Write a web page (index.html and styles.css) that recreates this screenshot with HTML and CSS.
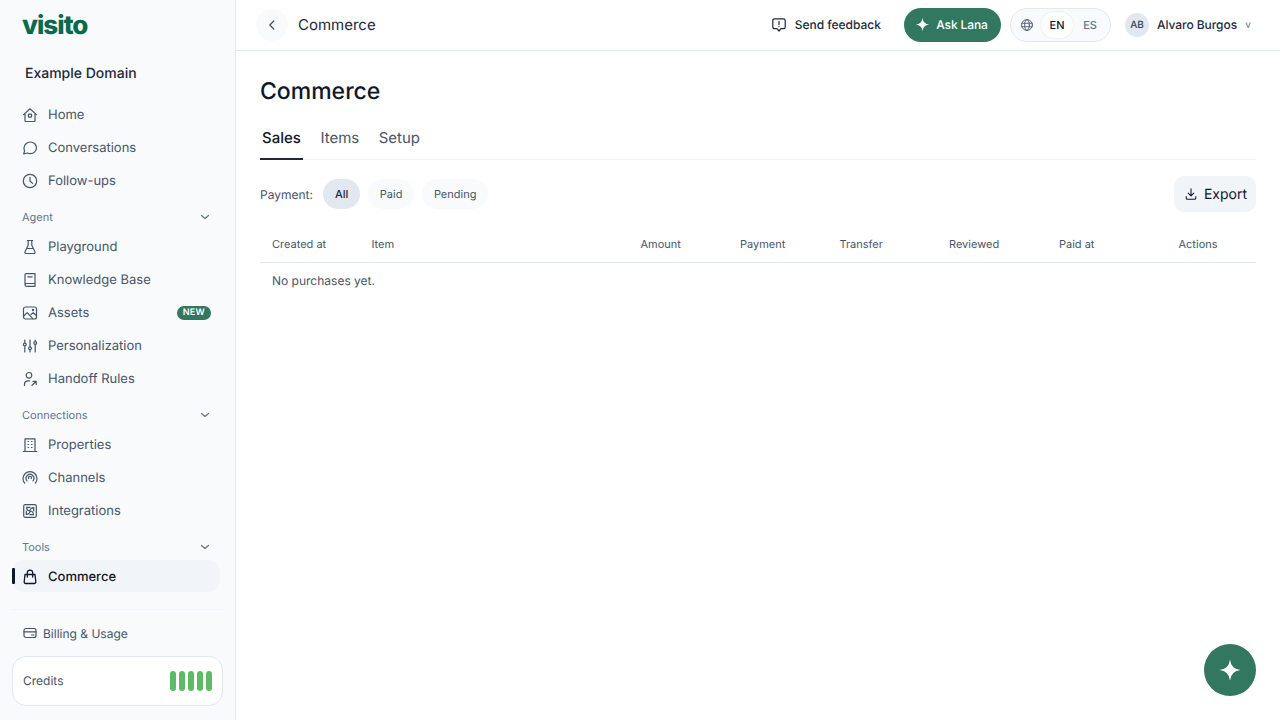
FILE: index.html
```html
<!DOCTYPE html>
<html lang="en">
<head>
<meta charset="utf-8">
<title>Commerce</title>
<link rel="stylesheet" href="styles.css">
</head>
<body>
<div class="app">
  <aside class="sidebar">
    <div class="logo">visito</div>
    <div class="domain">Example Domain</div>
    <nav class="nav">
      <a class="item"><svg class="ico" viewBox="0 0 16 16"><path d="M1.600 7.600 8 1.800l6.400 5.800M3 6.600v7.100c0 .5.300.8.800.8h8.400c.5 0 .8-.3.8-.8V6.600"/><rect x="6.400" y="7.200" width="3.200" height="3" rx=".6"/></svg>Home</a>
      <a class="item"><svg class="ico" viewBox="0 0 16 16"><path d="M8.400 2c3.400 0 6.100 2.600 6.100 5.800s-2.700 5.800-6.100 5.800c-1 0-2-.2-2.800-.6l-3.900.9.900-3.200C2 9.800 1.900 8.800 2 7.800 2.200 4.600 5 2 8.400 2Z"/></svg>Conversations</a>
      <a class="item"><svg class="ico" viewBox="0 0 16 16"><circle cx="8" cy="8" r="6.700"/><path d="M8 4.300V8l2.600 2.400"/></svg>Follow-ups</a>
      <div class="section"><span>Agent</span><svg class="chev" viewBox="0 0 10 10"><path d="m1.500 3.500 3.500 3 3.500-3"/></svg></div>
      <a class="item"><svg class="ico" viewBox="0 0 16 16"><path d="M5.300 1.500h5.400M6.200 1.500v4.700L3 12.700c-.4.900.1 1.800 1 1.800h8c.9 0 1.400-.9 1-1.800L9.800 6.200V1.500M4.800 9.500h6.400"/></svg>Playground</a>
      <a class="item"><svg class="ico" viewBox="0 0 16 16"><path d="M3 12.300V2.800c0-.6.500-1.100 1.100-1.100h8.900v12.600H4.500C3.700 14.300 3 13.600 3 12.800s.7-1.300 1.500-1.300H13M5.800 4.800h4.400"/></svg>Knowledge Base</a>
      <a class="item"><svg class="ico" viewBox="0 0 16 16"><rect x="1.500" y="2" width="13" height="12" rx="2"/><path d="m1.700 11 3.500-3.400 5.500 6M9 9.500l2.200-1.700 3.200 2.700"/><circle cx="11" cy="5" r=".6"/></svg><span class="grow">Assets</span><span class="new">NEW</span></a>
      <a class="item"><svg class="ico" viewBox="0 0 16 16"><path d="M2.800 2v2.500M2.800 8.500V14M8 2v6.500M8 12v2M13.200 2v1M13.200 7v7"/><circle cx="2.800" cy="6.500" r="1.400"/><circle cx="8" cy="10.300" r="1.400"/><circle cx="13.200" cy="5" r="1.400"/></svg>Personalization</a>
      <a class="item"><svg class="ico" viewBox="0 0 16 16"><circle cx="7" cy="4.300" r="2.800"/><path d="M2.500 14.500v-1.200c0-2 1.500-3.500 3.500-3.500h1.500M10 14.300l4-3.800M11 10.300h3.200v3.200"/></svg>Handoff Rules</a>
      <div class="section"><span>Connections</span><svg class="chev" viewBox="0 0 10 10"><path d="m1.500 3.500 3.500 3 3.500-3"/></svg></div>
      <a class="item"><svg class="ico" viewBox="0 0 16 16"><path d="M3 14.500V1.800h10v12.700M1.200 14.500h13.600M6 4.500h.5M9.500 4.500h.5M6 7.500h.5M9.500 7.500h.5M6 10.500h.5M9.500 10.500h.5"/></svg>Properties</a>
      <a class="item"><svg class="ico" viewBox="0 0 16 16"><path d="M2.600 13A7 7 0 1 1 13.400 13M5 10.800a3.900 3.900 0 1 1 6 0"/><path d="M6.700 8.500a1.500 1.500 0 1 1 2.600 0"/></svg>Channels</a>
      <a class="item"><svg class="ico" viewBox="0 0 16 16"><rect x="1.700" y="1.700" width="12.600" height="12.600" rx="1.500"/><path d="M8 8C6.300 8 4.800 6.800 4.500 4.300H8M8 8C8 6.300 9.200 4.800 11.700 4.500V8M8 8C9.700 8 11.200 9.200 11.500 11.700H8M8 8C8 9.700 6.800 11.200 4.300 11.500V8"/></svg>Integrations</a>
      <div class="section"><span>Tools</span><svg class="chev" viewBox="0 0 10 10"><path d="m1.500 3.500 3.500 3 3.500-3"/></svg></div>
      <a class="item active"><svg class="ico" viewBox="0 0 16 16"><path d="M3 5.500h10l.8 7.300c.1.900-.6 1.700-1.500 1.700H3.700c-.9 0-1.600-.8-1.500-1.700L3 5.500ZM5.300 8V3.800a2.700 2.700 0 0 1 5.400 0V8"/></svg>Commerce</a>
    </nav>
    <div class="divider"></div>
    <a class="billing"><svg class="ico-sm" viewBox="0 0 14 14"><rect x="1" y="2.500" width="12" height="9" rx="2"/><path d="M1 5.800h12M8.500 9H11"/></svg>Billing &amp; Usage</a>
    <div class="credits"><span class="grow">Credits</span><div class="bars"><i></i><i></i><i></i><i></i><i></i></div></div>
  </aside>
  <main class="main">
    <header class="topbar">
      <button class="back"><svg viewBox="0 0 16 16"><path d="M10 3.500 5.500 8l4.500 4.500"/></svg></button>
      <div class="crumb">Commerce</div>
      <a class="feedback"><svg viewBox="0 0 16 16"><path d="M3.500 1.800h9c1 0 1.700.7 1.700 1.700v6.500c0 1-.7 1.700-1.700 1.700H10L8 14l-2-2.300H3.500c-1 0-1.700-.7-1.700-1.700V3.500c0-1 .7-1.700 1.700-1.700ZM8 4.300v3.200M8 9.300v.1"/></svg>Send feedback</a>
      <button class="ask"><svg viewBox="0 0 24 24"><path d="M12 1.500Q13 11 22.500 12 13 13 12 22.500 11 13 1.500 12 11 11 12 1.500Z"/></svg>Ask Lana</button>
      <div class="lang">
        <svg viewBox="0 0 16 16"><circle cx="8" cy="8" r="6.200"/><ellipse cx="8" cy="8" rx="2.700" ry="6.200"/><path d="M2 6h12M2 10h12"/></svg>
        <span class="on">EN</span><span class="off">ES</span>
      </div>
      <div class="user"><span class="avatar">AB</span><span class="name">Alvaro Burgos</span><span class="caret">v</span></div>
    </header>
    <section class="content">
      <h1>Commerce</h1>
      <div class="tabs"><span class="tab sel">Sales</span><span class="tab">Items</span><span class="tab">Setup</span></div>
      <div class="filters">
        <span class="plabel">Payment:</span>
        <span class="pill cur">All</span><span class="pill">Paid</span><span class="pill">Pending</span>
        <button class="export"><svg viewBox="0 0 16 16"><path d="M8 2v8M4.800 7 8 10.200 11.200 7M2.500 11v1.500c0 .8.700 1.500 1.500 1.500h8c.8 0 1.500-.7 1.500-1.500V11"/></svg>Export</button>
      </div>
      <div class="thead"><span>Created at</span><span>Item</span><span>Amount</span><span>Payment</span><span>Transfer</span><span>Reviewed</span><span>Paid at</span><span>Actions</span></div>
      <div class="empty">No purchases yet.</div>
    </section>
  </main>
</div>
<button class="fab"><svg viewBox="0 0 24 24"><path d="M12 1.500Q13 11 22.500 12 13 13 12 22.500 11 13 1.500 12 11 11 12 1.500Z"/></svg></button>
</body>
</html>
```
FILE: styles.css
```css
* { box-sizing: border-box; }
html, body { margin: 0; height: 100%; }
body { font-family: Inter, "Liberation Sans", sans-serif; color: #0f172a; background: #fff; overflow: hidden; text-rendering: geometricPrecision; }
button { font-family: inherit; border: 0; padding: 0; text-rendering: inherit; }
svg { fill: none; stroke: currentColor; stroke-width: 1.2; stroke-linecap: round; stroke-linejoin: round; flex: none; }
.app { display: flex; height: 720px; }
.grow { flex: 1; }

.sidebar { width: 236px; flex: none; background: #f8fafc; border-right: 1px solid #e2e8f0; padding: 0 12px; display: flex; flex-direction: column; }
.logo { font-size: 26px; line-height: 34px; font-weight: 800; letter-spacing: -1px; color: #0b6a4d; margin: 9px 0 0 10px; }
.domain { font-size: 14px; line-height: 20px; font-weight: 500; color: #1e293b; margin: 21px 0 0 13px; }
.nav { display: flex; flex-direction: column; margin-top: 14px; margin-right: 2px; }
.item { height: 33px; display: flex; align-items: center; gap: 10px; padding: 0 10px; font-size: 13px; color: #475569; border-radius: 12px; position: relative; }
.ico { width: 16px; height: 16px; }
.section { height: 24px; margin-top: 8px; margin-bottom: 1px; padding: 0 10px; display: flex; align-items: center; justify-content: space-between; font-size: 11px; color: #64748b; }
.chev { width: 10px; height: 10px; margin-left: -1px; transform: translateX(-1px); }
.new { background: #327860; color: #fff; font-size: 9px; line-height: 14px; height: 14px; font-weight: 600; padding: 0 6px; border-radius: 7px; letter-spacing: .3px; }
.active { background: #f1f5f9; color: #0f172a; font-weight: 500; height: 32px; padding-top: 2px; margin-right: 1px; }
.active .ico { stroke-width: 1.3; }
.active::before { content: ""; position: absolute; left: 0; top: 8px; width: 3px; height: 16px; background: #0f172a; border-radius: 1px; }
.divider { height: 1px; background: #f1f5f9; margin-top: 17px; }
.billing { display: flex; align-items: center; gap: 6px; font-size: 12px; color: #475569; margin: 14px 0 0 11px; height: 18px; }
.ico-sm { width: 14px; height: 14px; }
.credits { display: flex; align-items: center; height: 50px; margin-top: 14px; padding: 0 10px 1px; background: #fff; border: 1px solid #e2e8f0; border-radius: 14px; font-size: 12px; color: #475569; }
.bars { display: flex; gap: 3px; }
.bars i { width: 6px; height: 20px; border-radius: 3px; background: #5dbb63; }

.main { flex: 1; min-width: 0; display: flex; flex-direction: column; }
.topbar { height: 51px; flex: none; display: flex; align-items: center; padding: 0 24px 1px 20px; border-bottom: 1px solid #e2e8f0; }
.back { width: 32px; height: 32px; border-radius: 50%; background: #f8fafc; color: #475569; display: flex; align-items: center; justify-content: center; }
.back svg { width: 14px; height: 14px; stroke-width: 1.5; }
.crumb { flex: 1; margin-left: 10px; font-size: 15px; color: #1e293b; }
.feedback { display: flex; align-items: center; gap: 8px; font-size: 12px; font-weight: 500; color: #1e293b; }
.feedback svg { width: 16px; height: 16px; }
.ask { margin-left: 23px; width: 97px; height: 34px; border-radius: 17px; background: #327860; color: #fff; font-size: 12px; font-weight: 500; letter-spacing: -.1px; display: flex; align-items: center; justify-content: center; gap: 6px; padding-right: 2px; }
.ask svg { width: 15px; height: 15px; fill: #fff; stroke: none; }
.lang { margin-left: 9px; width: 101px; height: 34px; border: 1px solid #e2e8f0; border-radius: 17px; background: #f8fafc; display: flex; align-items: center; padding-left: 9px; font-size: 11px; font-weight: 500; }
.lang svg { width: 14px; height: 14px; color: #475569; stroke-width: 1; }
.on { margin-left: 7px; width: 32px; height: 26px; border-radius: 13px; background: #fff; color: #0f172a; font-weight: 500; display: flex; align-items: center; justify-content: center; box-shadow: 0 0 2px rgba(15, 23, 42, .12); }
.off { margin-left: 1px; width: 32px; color: #64748b; text-align: center; }
.user { margin-left: 14px; display: flex; align-items: center; width: 131px; white-space: nowrap; }
.avatar { width: 24px; height: 24px; border-radius: 50%; background: #e2e8f0; color: #334155; font-size: 10px; font-weight: 500; display: flex; align-items: center; justify-content: center; }
.name { margin-left: 8px; font-size: 12px; font-weight: 500; letter-spacing: -.05px; color: #1e293b; }
.caret { margin-left: 8px; font-size: 10px; color: #64748b; }

.content { padding: 24px 24px 0; }
h1 { margin: 0; font-size: 23px; line-height: 32px; font-weight: 500; color: #0f172a; }
.tabs { display: flex; gap: 15.5px; margin-top: 11px; height: 42px; border-bottom: 1px solid #f1f5f9; }
.tab { font-size: 15px; line-height: 24px; padding: 8px 2px 0; color: #475569; height: 42px; }
.sel { color: #0f172a; font-weight: 500; border-bottom: 2px solid #1e293b; }
.filters { display: flex; align-items: center; margin-top: 16px; height: 36px; gap: 7.5px; }
.plabel { font-size: 12px; color: #475569; margin-right: 2.5px; }
.pill { height: 30px; padding: 0 12px; border-radius: 15px; background: #f8fafc; font-size: 11px; color: #475569; display: flex; align-items: center; }
.cur { background: #e2e8f0; color: #1e293b; font-weight: 500; }
.export { margin-left: auto; width: 82px; height: 36px; border-radius: 10px; background: #f1f5f9; color: #0f172a; font-size: 14px; display: flex; align-items: center; justify-content: center; gap: 6px; padding-left: 1px; }
.export svg { width: 14px; height: 14px; }
.thead { display: grid; grid-template-columns: 99.5px 269px 99.5px 99.5px 109.5px 110px 119.5px 1fr; padding: 0 12px; height: 37px; margin-top: 14px; align-items: center; border-bottom: 1px solid #e2e8f0; font-size: 11px; color: #475569; }
.empty { padding: 0 12px; margin-top: 9px; font-size: 12px; line-height: 18px; color: #475569; }
.fab { position: fixed; right: 24px; bottom: 24px; width: 52px; height: 52px; border-radius: 50%; background: #327860; display: flex; align-items: center; justify-content: center; }
.fab svg { width: 24px; height: 24px; fill: #fff; stroke: none; }
```
